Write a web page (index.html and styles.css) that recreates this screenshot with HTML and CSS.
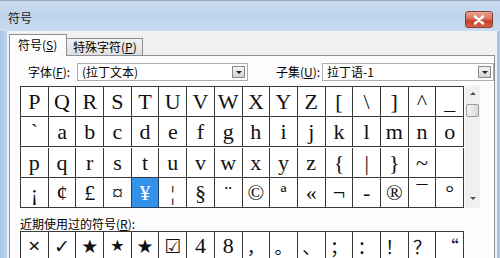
FILE: index.html
```html
<!DOCTYPE html>
<html>
<head>
<meta charset="utf-8">
<link rel="stylesheet" href="styles.css">
</head>
<body>
<div class="window">
  <div class="titlebar">
    <span class="title">符号</span>
    <div class="close"><svg width="12" height="10" viewBox="0 0 12 10"><path d="M2 1.5 L10 8.5 M10 1.5 L2 8.5" stroke="#fff" stroke-width="2.4" stroke-linecap="round"/></svg></div>
  </div>
  <div class="frame">
    <div class="content">
      <div class="tabs">
        <div class="tab active">符号(<u>S</u>)</div>
        <div class="tab">特殊字符(<u>P</u>)</div>
      </div>
      <div class="panel">
        <div class="fields">
          <span class="label">字体(<u>F</u>):</span>
          <div class="combo c1"><span class="val">(拉丁文本)</span><span class="drop"></span></div>
          <span class="label l2">子集(<u>U</u>):</span>
          <div class="combo c2"><span class="val">拉丁语-1</span><span class="drop"></span></div>
        </div>
        <div class="gridwrap">
          <div class="grid">
            <div class="cell">P</div><div class="cell">Q</div><div class="cell">R</div><div class="cell">S</div><div class="cell">T</div><div class="cell">U</div><div class="cell">V</div><div class="cell">W</div><div class="cell">X</div><div class="cell">Y</div><div class="cell">Z</div><div class="cell">[</div><div class="cell">\</div><div class="cell">]</div><div class="cell">^</div><div class="cell">_</div>
            <div class="cell">`</div><div class="cell">a</div><div class="cell">b</div><div class="cell">c</div><div class="cell">d</div><div class="cell">e</div><div class="cell">f</div><div class="cell">g</div><div class="cell">h</div><div class="cell">i</div><div class="cell">j</div><div class="cell">k</div><div class="cell">l</div><div class="cell">m</div><div class="cell">n</div><div class="cell">o</div>
            <div class="cell">p</div><div class="cell">q</div><div class="cell">r</div><div class="cell">s</div><div class="cell">t</div><div class="cell">u</div><div class="cell">v</div><div class="cell">w</div><div class="cell">x</div><div class="cell">y</div><div class="cell">z</div><div class="cell">{</div><div class="cell">|</div><div class="cell">}</div><div class="cell">~</div><div class="cell"></div>
            <div class="cell">¡</div><div class="cell">¢</div><div class="cell">£</div><div class="cell">¤</div><div class="cell sel">¥</div><div class="cell">¦</div><div class="cell">§</div><div class="cell">¨</div><div class="cell">©</div><div class="cell">ª</div><div class="cell">«</div><div class="cell">¬</div><div class="cell">-</div><div class="cell">®</div><div class="cell">¯</div><div class="cell">°</div>
          </div>
          <div class="scroll">
            <span class="arrow up"></span>
            <span class="thumb"></span>
            <span class="arrow down"></span>
          </div>
        </div>
        <div class="recent-label">近期使用过的符号(<u>R</u>):</div>
        <div class="grid recent">
          <div class="cell bold">×</div><div class="cell sym">✓</div><div class="cell sym">★</div><div class="cell sym thin">★</div><div class="cell sym">★</div><div class="cell sym">☑</div><div class="cell">4</div><div class="cell">8</div><div class="cell cjk">，</div><div class="cell cjk">。</div><div class="cell cjk">、</div><div class="cell cjk">；</div><div class="cell cjk">：</div><div class="cell cjk">！</div><div class="cell cjk">？</div><div class="cell cjk">“</div>
        </div>
      </div>
    </div>
  </div>
</div>
</body>
</html>
```
FILE: styles.css
```css
html, body {
  margin: 0;
  padding: 0;
}
body {
  width: 500px;
  height: 258px;
  overflow: hidden;
  font-family: "Noto Sans CJK SC", "DejaVu Sans", sans-serif;
  font-size: 12px;
  color: #000;
}
u { text-decoration: underline; }
.window {
  width: 500px;
  height: 258px;
  overflow: hidden;
  background: linear-gradient(to right, #a9c6e6 0px, #bcd4ee 7px, #bcd4ee 488px, #a6c3e4 500px);
}
.titlebar {
  height: 31px;
  display: flex;
  align-items: flex-start;
  background: linear-gradient(to bottom, #cadcf0 0px, #bfd4ec 15px, #cbdcf0 31px);
  border-top: 1px solid #8ea9c8;
  box-sizing: border-box;
}
.title {
  margin-left: 8px;
  margin-top: 9px;
  line-height: 16px;
  font-size: 12px;
  color: #1a1a1a;
}
.close {
  margin-left: auto;
  margin-right: 7px;
  margin-top: 10px;
  width: 28px;
  height: 17px;
  box-sizing: border-box;
  border: 1px solid #8a3b30;
  border-radius: 3px;
  background: linear-gradient(to bottom, #e8a796 0px, #d9705b 7px, #c2402c 9px, #d96a4e 16px);
  display: flex;
  align-items: center;
  justify-content: center;
}
.frame {
  display: flex;
  padding: 0 12px 0 7px;
  height: 227px;
}
.content {
  flex: 1;
  background: #f1f1f1;
  padding: 3px 2px 0 2px;
  display: flex;
  flex-direction: column;
}
.tabs {
  display: flex;
  align-items: flex-end;
  height: 21px;
  position: relative;
  z-index: 1;
}
.tab {
  box-sizing: border-box;
  height: 17px;
  width: 76px;
  border: 1px solid #8d9095;
  border-bottom: none;
  border-left: none;
  background: linear-gradient(to bottom, #f3f3f3, #dedede);
  line-height: 16px;
  padding-left: 6px;
  font-size: 12px;
  white-space: nowrap;
}
.tab.active {
  width: 58px;
  height: 22px;
  margin-bottom: -1px;
  border-left: 1px solid #8d9095;
  background: #fcfcfc;
  line-height: 20px;
  padding-left: 8px;
}
.panel {
  flex: 1;
  border: 1px solid #8d9095;
  border-bottom: none;
  background: #fcfcfc;
  padding: 7px 0 0 10px;
  overflow: hidden;
}
.fields {
  display: flex;
  align-items: center;
  height: 18px;
}
.label {
  width: 49px;
  padding-left: 8px;
  white-space: nowrap;
  line-height: 18px;
}
.label.l2 {
  width: 46px;
  padding-left: 28px;
}
.combo {
  box-sizing: border-box;
  height: 18px;
  border: 1px solid #abadb3;
  background: #fff;
  display: flex;
  align-items: center;
  padding-left: 4px;
  padding-right: 2px;
}
.combo.c1 { width: 171px; }
.combo.c2 { width: 172px; }
.combo .val {
  flex: 1;
  line-height: 16px;
  white-space: nowrap;
}
.drop {
  width: 13px;
  height: 12px;
  box-sizing: border-box;
  border: 1px solid #8a8a8a;
  background: linear-gradient(to bottom, #f4f4f4, #d4d4d4);
  position: relative;
}
.drop::after {
  content: "";
  position: absolute;
  left: 3px;
  top: 4px;
  border-left: 3px solid transparent;
  border-right: 3px solid transparent;
  border-top: 3px solid #222;
}
.gridwrap {
  display: flex;
  margin-top: 5px;
}
.grid {
  box-sizing: border-box;
  width: 444px;
  display: grid;
  grid-template-columns: repeat(16, 1fr);
  border-top: 1px solid #3a3a3a;
  border-left: 1px solid #3a3a3a;
  background: #fff;
}
.cell {
  box-sizing: border-box;
  height: 30px;
  border-right: 1px solid #3a3a3a;
  border-bottom: 1px solid #3a3a3a;
  font-family: "Liberation Serif", "DejaVu Serif", serif;
  font-size: 22px;
  line-height: 29px;
  text-align: center;
  color: #111;
  overflow: hidden;
}
.cell.sel {
  background: #3391ea;
  color: #fff;
  border-color: #1d3f66;
}
.scroll {
  width: 15px;
  height: 122px;
  margin-left: 1px;
  background: #f0f0f0;
  display: flex;
  flex-direction: column;
  align-items: center;
}
.arrow {
  width: 0;
  height: 0;
  border-left: 3px solid transparent;
  border-right: 3px solid transparent;
}
.arrow.up {
  margin-top: 6px;
  border-bottom: 3px solid #505050;
}
.arrow.down {
  margin-top: auto;
  margin-bottom: 8px;
  border-top: 3px solid #505050;
}
.thumb {
  margin-top: 9px;
  width: 13px;
  height: 13px;
  box-sizing: border-box;
  border: 1px solid #9d9d9d;
  border-radius: 2px;
  background: linear-gradient(to right, #f3f3f3, #dadada);
}
.recent-label {
  margin-top: 9px;
  line-height: 14px;
  height: 14px;
  white-space: nowrap;
}
.grid.recent {
  margin-top: 0;
}
.grid.recent .cell {
  height: 28px;
  line-height: 28px;
  border-bottom: none;
}
.cell.bold {
  font-weight: bold;
  font-size: 22px;
}
.cell.sym {
  font-family: "DejaVu Sans", sans-serif;
  font-size: 19px;
}
.cell.sym.thin {
  font-size: 16px;
}
.cell.cjk {
  font-family: "Noto Sans CJK SC", sans-serif;
  font-size: 18px;
}
```
